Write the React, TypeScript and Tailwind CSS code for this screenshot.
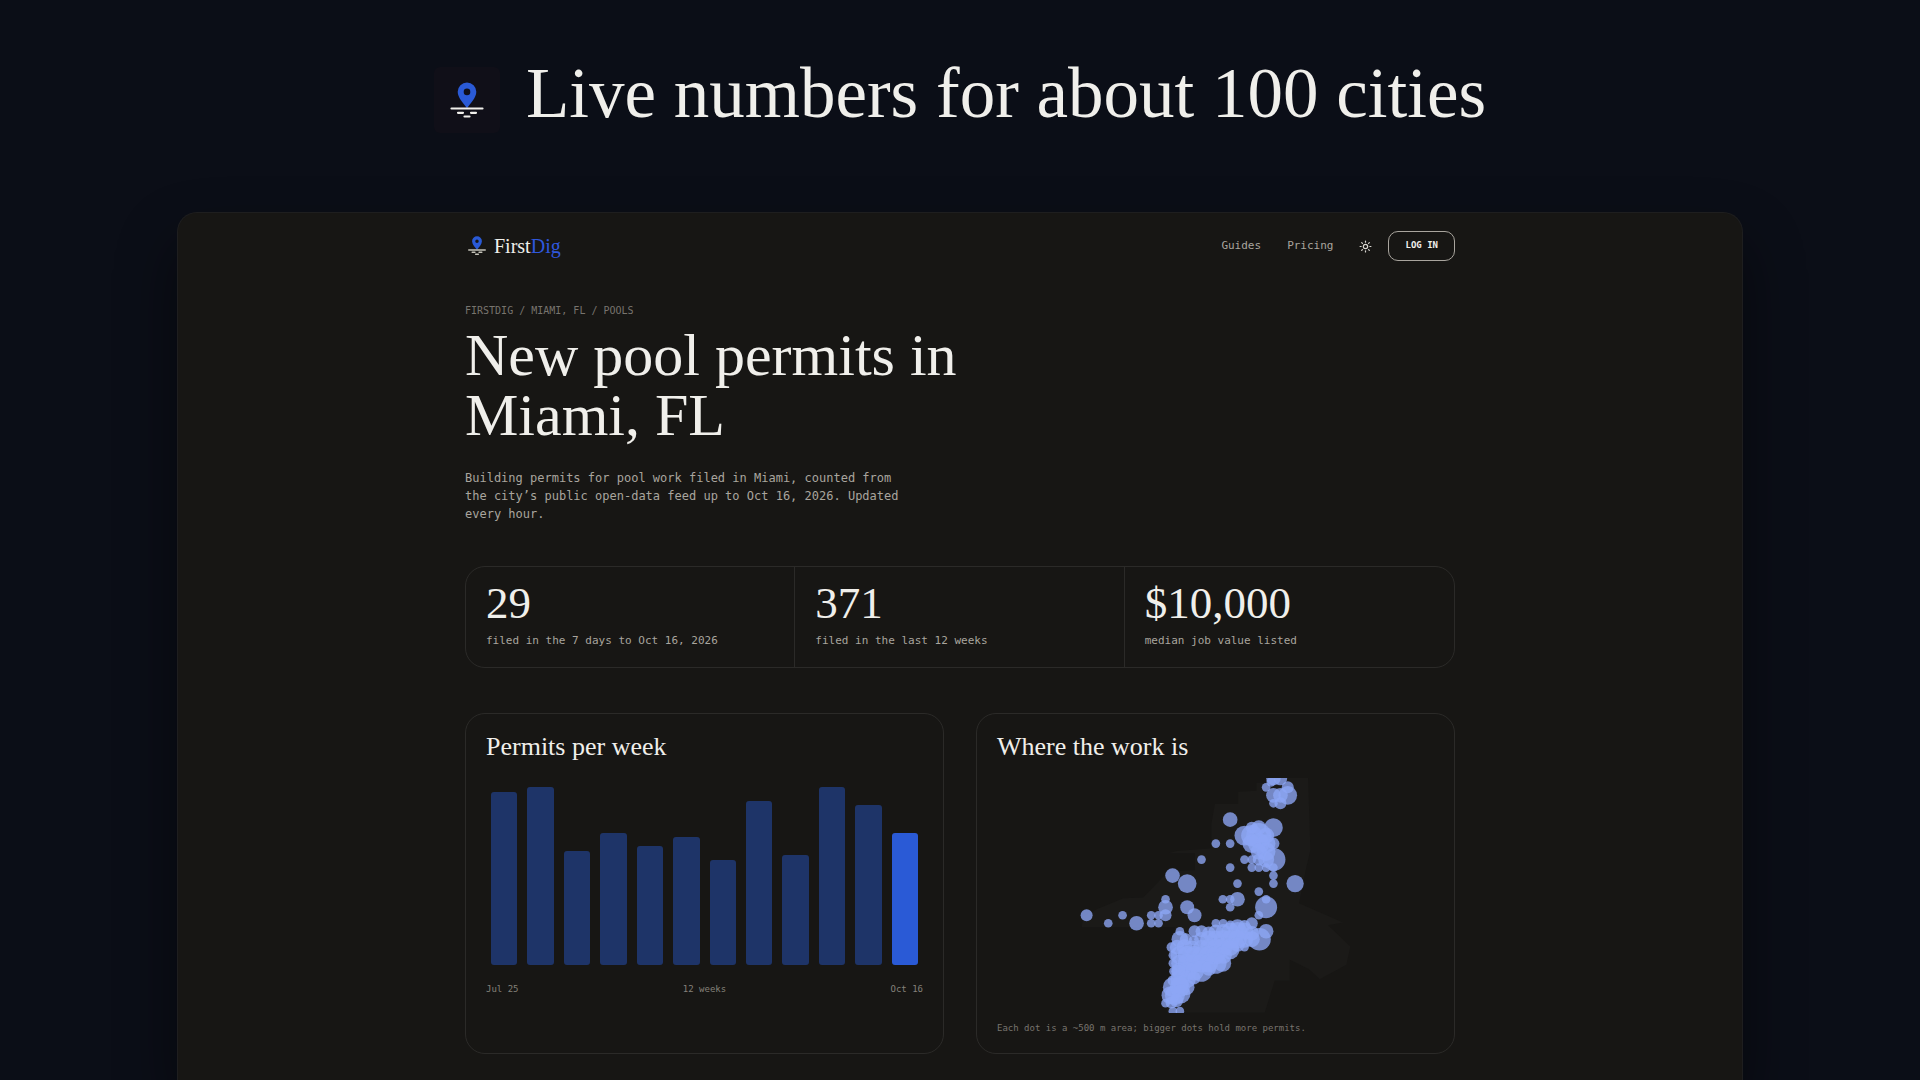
import { Sun } from 'lucide-react';

const SERIF = "font-['Liberation_Serif',serif]";
const MONO = "font-['DejaVu_Sans_Mono',monospace]";

// permits filed in each of the last 12 weeks
const WEEKS = [38, 39, 25, 29, 26, 28, 23, 36, 24, 39, 35, 29];

const STATS = [
  { value: '29', label: 'filed in the 7 days to Oct 16, 2026' },
  { value: '371', label: 'filed in the last 12 weeks' },
  { value: '$10,000', label: 'median job value listed' },
];

const LAND =
  'M625 24H745L752 240L738 300L718 400L850 458L805 466L872 530L860 585L780 628L748 598L690 570V632H645L615 728H320L345 472H65L70 440L110 418L190 385L250 383L325 305L405 300V250H325L350 243L455 235L455 160L465 102H535V65L590 62V38H625Z';

// [x, y, radius]
const DOTS: [number, number, number][] = [
  // north tip
  [619, 52, 13], [641, 76, 22], [641, 24, 22], [662, 26, 20], [684, 52, 18],
  [684, 76, 28], [662, 76, 22], [662, 100, 18], [641, 100, 13], [634, 36, 14],
  // upper east side
  [641, 173, 28], [554, 197, 30], [576, 197, 32], [597, 197, 38], [576, 173, 18],
  [597, 173, 22], [619, 197, 24], [576, 221, 28], [597, 221, 32], [619, 221, 28],
  [619, 245, 28], [597, 245, 24], [641, 221, 18], [576, 269, 13], [597, 269, 18],
  [619, 269, 24], [643, 269, 34], [554, 269, 13], [576, 293, 13], [597, 293, 13],
  [619, 293, 13], [641, 293, 13], [641, 317, 13], [641, 341, 13],
  // scattered
  [511, 149, 22], [468, 221, 13], [511, 221, 13], [425, 269, 13], [511, 293, 13],
  [338, 317, 22], [382, 341, 28], [533, 341, 13], [597, 365, 13], [706, 341, 26],
  [317, 388, 13], [317, 412, 22], [317, 436, 18], [274, 436, 13], [296, 436, 13],
  [274, 460, 13], [296, 460, 13], [230, 460, 22], [188, 436, 13], [145, 460, 13],
  [80, 436, 18], [382, 412, 21], [404, 436, 21], [489, 388, 13], [511, 388, 13],
  [511, 412, 13], [533, 388, 22], [619, 412, 33], [619, 388, 13], [597, 436, 13],
  // south band, row by row
  [468, 460, 13], [490, 460, 13], [511, 466, 14], [533, 470, 22], [554, 468, 18], [576, 460, 18],
  [360, 484, 13], [404, 484, 18], [425, 484, 18], [447, 490, 20], [468, 486, 22],
  [490, 484, 22], [511, 484, 26], [533, 484, 28], [554, 484, 26], [576, 490, 22], [619, 484, 22],
  [360, 508, 25], [378, 508, 18], [402, 512, 15], [425, 508, 22], [447, 508, 26],
  [468, 508, 26], [490, 508, 28], [511, 508, 28], [533, 508, 28], [554, 508, 26],
  [576, 508, 24], [599, 508, 34],
  [335, 532, 15], [352, 532, 22], [374, 532, 24], [396, 536, 24], [425, 536, 26], [447, 532, 26],
  [468, 532, 26], [490, 532, 28], [511, 532, 26], [533, 524, 22], [554, 532, 13],
  [339, 556, 13], [360, 556, 28], [382, 556, 28], [404, 556, 28], [425, 556, 28],
  [447, 556, 28], [468, 556, 28], [490, 556, 26], [511, 540, 28],
  [339, 580, 13], [360, 580, 26], [382, 580, 28], [404, 580, 28], [425, 580, 28],
  [447, 580, 28], [468, 580, 32], [488, 580, 26],
  [341, 604, 13], [360, 604, 26], [382, 604, 28], [404, 604, 28], [425, 604, 32], [447, 596, 22],
  [339, 632, 16], [360, 628, 28], [382, 628, 26], [402, 624, 20], [356, 604, 20],
  [339, 652, 30], [360, 652, 30], [380, 652, 24], [360, 644, 26],
  [332, 676, 27], [345, 676, 30], [364, 672, 28],
  [317, 700, 13], [335, 698, 18], [350, 692, 20],
  [339, 724, 13], [360, 724, 13],
];

function PinMark({ className, line, lineWidth }: { className: string; line: string; lineWidth: number }) {
  return (
    <svg className={className} viewBox="0 0 34 36" fill="none" aria-hidden="true">
      <path
        fill="#2a5ad6"
        fillRule="evenodd"
        d="M17 0.5a9.3 9.3 0 0 1 9.3 9.3c0 6-5.6 11-9.3 16.4c-3.7-5.4-9.3-10.4-9.3-16.4A9.3 9.3 0 0 1 17 0.5zM17 6.6a3.3 3.3 0 1 0 0 6.600a3.300 3.300 0 0 0 0-6.600z"
      />
      <path
        stroke={line}
        strokeWidth={lineWidth}
        strokeLinecap="round"
        d="M1.5 26.5H32.5M8 30.8H13M21 30.8H26M14.500 34.500H19.500"
      />
    </svg>
  );
}

function BarChart() {
  const max = Math.max(...WEEKS);
  return (
    <div
      className="mt-6 flex h-[178px] items-end gap-2.5 px-[5px]"
      role="img"
      aria-label="Permits filed per week"
    >
      {WEEKS.map((n, i) => (
        <div
          key={i}
          className={`flex-1 rounded-[3px] ${i === WEEKS.length - 1 ? 'bg-[#2a5ad6]' : 'bg-[#1e3468]'}`}
          style={{ height: `${(n / max) * 100}%` }}
        />
      ))}
    </div>
  );
}

function DotMap() {
  return (
    <svg
      className="mt-[15px] block h-auto w-full"
      viewBox="-189 24 1312 705"
      role="img"
      aria-label="Map of permit locations"
    >
      <path d={LAND} fill="#1b1a18" />
      <g fill="#8da6f5" fillOpacity="0.78">
        {DOTS.map(([x, y, r], i) => (
          <circle key={i} cx={x} cy={y} r={r} />
        ))}
      </g>
    </svg>
  );
}

export default function App() {
  return (
    <div className={`flex min-h-screen flex-col bg-[#0b0e17] text-[#f0efeb] ${MONO}`}>
      {/* Headline */}
      <div className="flex items-start justify-center gap-[26px] pt-[57px] pb-[79px]">
        <div className="mt-2.5 flex size-[66px] shrink-0 items-center justify-center rounded-md bg-[#100f18]">
          <PinMark className="w-[34px]" line="#f0efeb" lineWidth={2.2} />
        </div>
        <h2 className={`text-[71px] leading-[72px] whitespace-nowrap ${SERIF}`}>
          Live numbers for about 100 cities
        </h2>
      </div>

      {/* App window */}
      <div className="mx-[177px] flex-1 rounded-t-[20px] border border-b-0 border-[#1e1e1f] bg-[#171614] shadow-[0_30px_60px_rgba(0,0,0,0.45)]">
        <div className="mx-auto max-w-[990px] pb-6">
          <header className="flex h-[66px] items-center justify-between">
            <a href="#" className="flex items-center gap-2 pl-[3px]">
              <PinMark className="w-[18px]" line="#c4c2b8" lineWidth={3} />
              <span className={`text-[20px] leading-6 ${SERIF}`}>
                First<span className="text-[#2f57dc]">Dig</span>
              </span>
            </a>
            <nav className="flex items-center text-[11px] text-[#a9a59e]">
              <a href="#guides">Guides</a>
              <a href="#pricing" className="ml-[26px]">Pricing</a>
              <button type="button" aria-label="Toggle theme" className="ml-[26px] text-[#d8d5cf]">
                <Sun size={13} strokeWidth={2.2} />
              </button>
              <button
                type="button"
                className="ml-4 h-[30px] rounded-[10px] border border-[#a9a59e] px-4 text-[9px] font-bold text-[#f0efeb]"
              >
                LOG IN
              </button>
            </nav>
          </header>

          <main>
            <p className="mt-6 text-[10px] leading-4 text-[#77746e]">FIRSTDIG / MIAMI, FL / POOLS</p>
            <h1 className={`mt-1.5 text-[60px] leading-[60px] ${SERIF}`}>
              New pool permits in
              <br />
              Miami, FL
            </h1>
            <p className="mt-6 max-w-[450px] text-[12px] leading-[18px] text-[#a9a59e]">
              Building permits for pool work filed in Miami, counted from the city’s public open-data feed up to Oct
              16, 2026. Updated every hour.
            </p>

            {/* Stats */}
            <dl className="mt-[43px] grid grid-cols-3 divide-x divide-[#2b2a28] rounded-[20px] border border-[#2b2a28]">
              {STATS.map((s) => (
                <div key={s.label} className="flex flex-col-reverse px-5 pt-3.5 pb-[18px]">
                  <dt className="mt-2 text-[11px] leading-4 text-[#a9a59e]">{s.label}</dt>
                  <dd className={`text-[45px] leading-[44px] ${SERIF}`}>{s.value}</dd>
                </div>
              ))}
            </dl>

            {/* Cards */}
            <div className="mt-[45px] grid grid-cols-2 gap-8">
              <section className="rounded-[20px] border border-[#2b2a28] px-5 py-[17px]">
                <h2 className={`text-[26px] leading-8 ${SERIF}`}>Permits per week</h2>
                <BarChart />
                <div className="mt-4 flex justify-between text-[9px] leading-4 text-[#84817a]">
                  <span>Jul 25</span>
                  <span>12 weeks</span>
                  <span>Oct 16</span>
                </div>
              </section>
              <section className="rounded-[20px] border border-[#2b2a28] px-5 py-[17px]">
                <h2 className={`text-[26px] leading-8 ${SERIF}`}>Where the work is</h2>
                <DotMap />
                <p className="mt-[7px] text-[9px] leading-4 text-[#77746e]">
                  Each dot is a ~500 m area; bigger dots hold more permits.
                </p>
              </section>
            </div>
          </main>
        </div>
      </div>
    </div>
  );
}
